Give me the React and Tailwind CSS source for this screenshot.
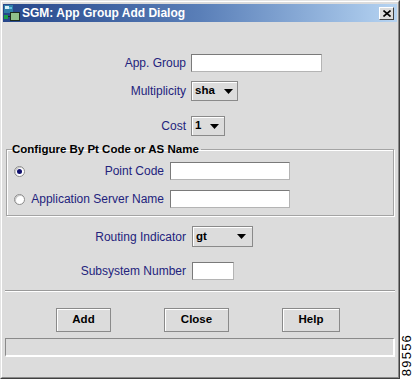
import React from 'react'

function Label({ children, className = '' }) {
  return <span className={`text-[12px] leading-[14px] text-[#23237c] whitespace-nowrap ${className}`}>{children}</span>
}

function Arrow() {
  return (
    <svg width="9" height="5" viewBox="0 0 9 5" className="shrink-0">
      <path d="M0 0h9L4.5 5z" fill="#000" />
    </svg>
  )
}

function Radio({ checked }) {
  return (
    <div className="w-[11px] h-[11px] rounded-full border border-[#8c8c8c] bg-white flex items-center justify-center shadow-[inset_1px_1px_0_#c8c8c8]">
      {checked && <div className="w-[5px] h-[5px] rounded-full bg-[#10106e]" />}
    </div>
  )
}

function AppIcon() {
  return (
    <svg width="16" height="16" viewBox="0 0 16 16" className="shrink-0">
      <rect x="0" y="0" width="9" height="8" fill="#2f7fa8" />
      <rect x="1" y="1" width="4" height="3" fill="#d8f0f8" />
      <rect x="5" y="2" width="3" height="2" fill="#5fbfe0" />
      <rect x="6" y="7" width="10" height="9" fill="#1d2b1d" />
      <rect x="7" y="8" width="8" height="7" fill="#8fc08a" />
      <rect x="0" y="10" width="4" height="4" fill="#1aa04a" />
      <rect x="4" y="11" width="2" height="1" fill="#1d2b1d" />
    </svg>
  )
}

export default function App() {
  const field = 'h-[18px] bg-white border border-t-[#7a7a7a] border-l-[#7a7a7a] border-r-[#b4b4b4] border-b-[#b4b4b4]'
  const raised = 'border border-[#8a8a8a] shadow-[inset_1px_1px_0_#ffffff] bg-[#dcdcdc]'

  return (
    <div className="flex w-[413px] h-[380px] bg-white font-['Liberation_Sans',Arial,sans-serif]">
      {/* Dialog window */}
      <div className="w-[400px] h-[379px] border border-t-[#e4e4e4] border-l-[#e4e4e4] border-r-[#404040] border-b-[#404040] bg-[#dcdcdc]">
        <div className="h-full flex flex-col border border-t-white border-l-white border-r-[#8a8a8a] border-b-[#8a8a8a] p-[1px]">
          {/* Title bar */}
          <div className="h-[18px] mt-[1px] flex items-center bg-linear-to-r from-[#26468a] via-[#5a7fb8] to-[#b6d4f2]">
            <div className="ml-[1px]"><AppIcon /></div>
            <span className="ml-[2px] text-[12px] font-bold text-white leading-none">SGM: App Group Add Dialog</span>
            <div className="ml-auto mr-[3px] w-[15px] h-[13px] bg-[#dcdcdc] border border-t-white border-l-white border-r-[#404040] border-b-[#404040] flex items-center justify-center">
              <svg width="8" height="7" viewBox="0 0 8 7">
                <path d="M0.5 0.5L7.5 6.5M7.5 0.5L0.5 6.5" stroke="#000" strokeWidth="1.6" />
              </svg>
            </div>
          </div>

          {/* Body */}
          <div className="flex flex-col flex-1">
            <div className="mt-[32px] flex items-center">
              <Label className="w-[183px] text-right">App. Group</Label>
              <div className={`${field} ml-[5px] w-[131px]`} />
            </div>

            <div className="mt-[9px] flex items-center">
              <Label className="w-[183px] text-right">Multiplicity</Label>
              <div className={`${raised} ml-[5px] w-[47px] h-[20px] flex items-center justify-between pl-[3px] pr-[4px]`}>
                <span className="text-[11.5px] font-bold">sha</span>
                <Arrow />
              </div>
            </div>

            <div className="mt-[15px] flex items-center">
              <Label className="w-[183px] text-right">Cost</Label>
              <div className={`${raised} ml-[5px] w-[34px] h-[20px] flex items-center justify-between pl-[3px] pr-[5px]`}>
                <span className="text-[11.5px] font-bold">1</span>
                <Arrow />
              </div>
            </div>

            {/* Group box */}
            <fieldset className="mt-[6px] mx-[3px] p-0 border border-[#a4a4a4] shadow-[inset_1px_1px_0_#fff,1px_1px_0_#fff] min-w-0">
              <legend className="ml-[5px] pr-[2px] text-[11.5px] font-bold leading-[14px] text-black">Configure By Pt Code or AS Name</legend>
              <div className="mt-[6px] flex items-center">
                <div className="ml-[7px]"><Radio checked /></div>
                <Label className="w-[139px] text-right">Point Code</Label>
                <div className={`${field} ml-[6px] w-[120px]`} />
              </div>
              <div className="mt-[10px] mb-[7px] flex items-center">
                <div className="ml-[7px]"><Radio /></div>
                <Label className="w-[139px] text-right">Application Server Name</Label>
                <div className={`${field} ml-[6px] w-[120px]`} />
              </div>
            </fieldset>

            <div className="mt-[10px] flex items-center">
              <Label className="w-[183px] text-right">Routing Indicator</Label>
              <div className={`${raised} ml-[6px] w-[61px] h-[21px] flex items-center justify-between pl-[3px] pr-[6px]`}>
                <span className="text-[11.5px] font-bold">gt</span>
                <Arrow />
              </div>
            </div>

            <div className="mt-[15px] flex items-center">
              <Label className="w-[183px] text-right">Subsystem Number</Label>
              <div className={`${field} ml-[6px] w-[42px]`} />
            </div>

            <div className="mt-[10px] mx-[2px] border-t border-t-[#9a9a9a] border-b border-b-white" />

            <div className="mt-[16px] flex ml-[53px] gap-[53px]">
              <button className={`${raised} w-[55px] h-[24px] text-[11.5px] font-bold`}>Add</button>
              <button className={`${raised} w-[65px] h-[24px] text-[11.5px] font-bold`}>Close</button>
              <button className={`${raised} w-[58px] h-[24px] text-[11.5px] font-bold`}>Help</button>
            </div>

            <div className="mt-[6px] mx-[2px] h-[19px] border-t border-l border-t-[#8a8a8a] border-l-[#8a8a8a] border-b-2 border-r-2 border-b-white border-r-white" />
          </div>
        </div>
      </div>

      {/* Figure number */}
      <div className="flex-1 flex flex-col justify-end pb-[4px] items-center">
        <span className="[writing-mode:vertical-rl] rotate-180 text-[13px] tracking-[1.2px] leading-none text-black">89556</span>
      </div>
    </div>
  )
}
